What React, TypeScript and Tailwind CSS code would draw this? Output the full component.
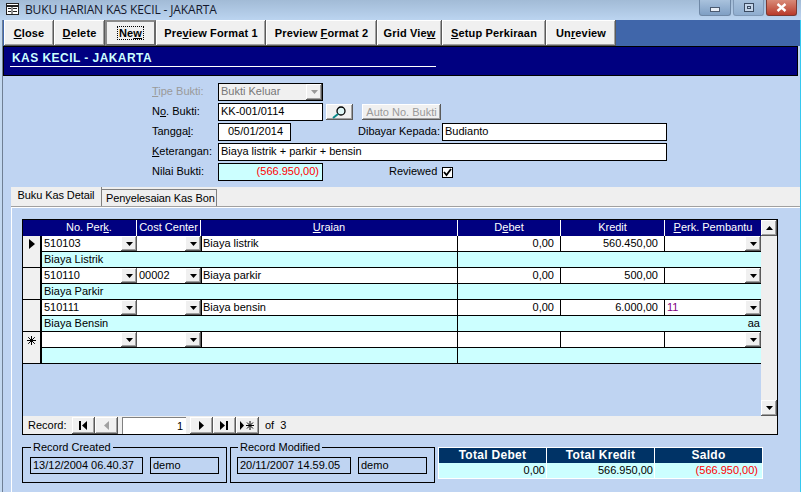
import React from "react";

const raised = "bg-[#f0f0f0] shadow-[inset_-1px_-1px_0_#5a5a5a,inset_1px_1px_0_#ffffff,inset_-2px_-2px_0_#a0a0a0]";

function Arrow({ color = "#000" }: { color?: string }) {
  return (
    <svg width="7" height="4" viewBox="0 0 7 4" className="block">
      <path d="M0 0h7L3.5 4z" fill={color} />
    </svg>
  );
}

function ComboBtn() {
  return (
    <div className={`w-4 h-[15px] shrink-0 ml-auto flex items-center justify-center ${raised}`}>
      <Arrow />
    </div>
  );
}

function ToolBtn({ w, children, focus }: { w: string; children: React.ReactNode; focus?: boolean }) {
  return (
    <div
      className={`${w} h-[26px] shrink-0 flex items-center justify-center font-bold tracking-[0.15px] text-black ${
        focus
          ? "bg-[#f0f0f0] border-2 border-t-[#8a8a8a] border-l-[#8a8a8a] border-r-[#6a6a6a] border-b-[#6a6a6a]"
          : raised
      }`}
    >
      {focus ? <span className="border border-dotted border-black px-[1px] leading-[12px]">{children}</span> : <span className="whitespace-pre">{children}</span>}
    </div>
  );
}

type RowData = { perk: string; cc: string; ur: string; deb: string; kre: string; pem: string; sub: string; subR?: string; mark?: "arrow" | "star" };

const rows: RowData[] = [
  { perk: "510103", cc: "", ur: "Biaya listrik", deb: "0,00", kre: "560.450,00", pem: "", sub: "Biaya Listrik", mark: "arrow" },
  { perk: "510110", cc: "00002", ur: "Biaya parkir", deb: "0,00", kre: "500,00", pem: "", sub: "Biaya Parkir" },
  { perk: "510111", cc: "", ur: "Biaya bensin", deb: "0,00", kre: "6.000,00", pem: "11", sub: "Biaya Bensin", subR: "aa" },
  { perk: "", cc: "", ur: "", deb: "", kre: "", pem: "", sub: "", mark: "star" },
];

const cols = "grid grid-cols-[95px_64px_257px_103px_104px_96px]";

function GridRow({ r }: { r: RowData }) {
  return (
    <div className="flex h-8">
      <div className="w-[19px] shrink-0 bg-[#f0f0f0] border-r-2 border-b border-black flex justify-center pt-[3px]">
        {r.mark === "arrow" && (
          <svg width="7" height="10" viewBox="0 0 7 10">
            <path d="M1 0l6 5-6 5z" fill="#000" />
          </svg>
        )}
        {r.mark === "star" && (
          <svg width="9" height="9" viewBox="0 0 9 9" className="mt-[1px]">
            <path d="M4.5 0v9M0 4.5h9M1.2 1.2l6.6 6.6M7.8 1.2l-6.6 6.6" stroke="#000" strokeWidth="1" />
          </svg>
        )}
      </div>
      <div className="flex-1 min-w-0">
        <div className={`${cols} h-4 bg-white border-b border-black`}>
          <div className="flex pl-[2px] leading-[15px]">
            <span>{r.perk}</span>
            <ComboBtn />
          </div>
          <div className="flex pl-[2px] leading-[15px]">
            <span>{r.cc}</span>
            <ComboBtn />
          </div>
          <div className="border-l border-r border-black pl-[1px] leading-[15px]">{r.ur}</div>
          <div className="border-r border-black text-right pr-[6px] leading-[15px]">{r.deb}</div>
          <div className="border-r border-black text-right pr-[6px] leading-[15px]">{r.kre}</div>
          <div className="flex pl-[2px] leading-[15px]">
            <span className="text-[#800080]">{r.pem}</span>
            <ComboBtn />
          </div>
        </div>
        <div className="flex h-4 bg-[#ccffff] border-b border-black leading-[15px]">
          <div className="w-[416px] border-r border-black pl-[2px]">{r.sub}</div>
          <div className="flex-1 text-right pr-[1px]">{r.subR}</div>
        </div>
      </div>
    </div>
  );
}

function NavBtn({ children }: { children: React.ReactNode }) {
  return <div className={`w-[23px] h-[17px] flex items-center justify-center ${raised}`}>{children}</div>;
}

function Info({ w, children }: { w: string; children: React.ReactNode }) {
  return <div className={`${w} h-[17px] border border-black pl-[2px] leading-[15px]`}>{children}</div>;
}

function Field({ className, children }: { className: string; children?: React.ReactNode }) {
  return <div className={`h-[18px] border border-black pl-[2px] leading-[14px] ${className}`}>{children}</div>;
}

export default function App() {
  return (
    <div className="w-[801px] h-[492px] overflow-hidden flex flex-col bg-[#bfd4f2] text-[11px] text-black font-['Liberation_Sans',Arial,sans-serif]">
      {/* title bar */}
      <div className="h-5 shrink-0 flex bg-gradient-to-b from-[#a2bbd6] to-[#bbd4f0] pl-[6px] pr-[4px]">
        <svg width="13" height="12" viewBox="0 0 13 12" className="mt-[3px] shrink-0">
          <rect x="0.5" y="0.5" width="12" height="11" fill="#fff" stroke="#222" />
          <path d="M0 3h13" stroke="#222" strokeWidth="2" />
          <path d="M2 5.5h3M2 8.5h3M7 5.5h4M7 8.5h4M6 4v7" stroke="#222" />
        </svg>
        <span className="ml-[6px] text-[12px] leading-[19px] text-[#14182c] font-['Open_Sans',sans-serif] tracking-[-0.14px]">
          BUKU HARIAN KAS KECIL - JAKARTA
        </span>
        <div className="ml-auto flex h-4 gap-[2px]">
          <div className="w-[32px] rounded-b-[3px] border border-t-0 border-[#6f88a6] bg-gradient-to-b from-[#a9c2dd] to-[#7f9fc4] flex items-center justify-center">
            <div className="w-[10px] h-[5px] mt-[3px] bg-[#e8eef6] border border-[#4a5a70]" />
          </div>
          <div className="w-[31px] rounded-b-[3px] border border-t-0 border-[#7f98b6] bg-gradient-to-b from-[#a9c2dd] to-[#8fadcf] flex items-center justify-center">
            <div className="w-[10px] h-[9px] border border-[#3a4a60] bg-[#c5d6ea] flex items-center justify-center">
              <div className="w-[4px] h-[3px] border border-[#3a4a60]" />
            </div>
          </div>
          <div className="w-[31px] rounded-b-[3px] border border-t-0 border-[#7a3a32] bg-gradient-to-b from-[#d88a78] to-[#b8392a] flex items-center justify-center">
            <svg width="11" height="9" viewBox="0 0 11 9">
              <path d="M1.5 1l8 7M9.5 1l-8 7" stroke="#fff" strokeWidth="2.4" />
            </svg>
          </div>
        </div>
      </div>

      <div className="flex-1 flex min-h-0">
        <div className="w-[3px] shrink-0 flex">
          <div className="w-[2px] bg-[#c3d8f0]" />
          <div className="w-[1px] bg-[#6f7f94]" />
        </div>

        <div className="flex-1 flex flex-col min-w-0">
          {/* toolbar */}
          <div className="h-[26px] shrink-0 flex bg-[#4066aa] pl-[1px]">
            <ToolBtn w="w-[50px]"><u>C</u>lose</ToolBtn>
            <ToolBtn w="w-[51px]"><u>D</u>elete</ToolBtn>
            <ToolBtn w="w-[51px]" focus>Ne<u>w</u></ToolBtn>
            <ToolBtn w="w-[110px]">Pre<u>v</u>iew Format 1</ToolBtn>
            <ToolBtn w="w-[111px]">Preview <u>F</u>ormat 2</ToolBtn>
            <ToolBtn w="w-[65px]">Grid Vie<u>w</u></ToolBtn>
            <ToolBtn w="w-[104px]"><u>S</u>etup Perkiraan</ToolBtn>
            <ToolBtn w="w-[70px]">Un<u>r</u>eview</ToolBtn>
          </div>

          {/* header */}
          <div className="h-[30px] shrink-0 mr-[2px] bg-[#000080] border-t border-b border-l border-r border-black pt-[4px]">
            <div className="ml-[6px] w-[426px] border-b border-white h-[16px] pl-[2px] text-[12px] leading-[14px] font-bold tracking-[0.45px] text-[#ccffff]">
              KAS KECIL - JAKARTA
            </div>
          </div>

          {/* form */}
          <div className="pl-[149px] pt-[6px] h-[111px] shrink-0">
            <div className="flex items-center h-5">
              <span className="w-[66px] mb-[2px] text-[#9a9a9a]"><u>T</u>ipe Bukti:</span>
              <div className="w-[105px] h-[18px] border border-black bg-[#f0f0f0] flex text-[#777] pl-[2px] leading-[14px]">
                <span>Bukti Keluar</span>
                <div className={`w-4 h-4 ml-auto flex items-center justify-center ${raised}`}>
                  <Arrow color="#999" />
                </div>
              </div>
            </div>
            <div className="flex items-center h-5">
              <span className="w-[66px] mb-[2px]">N<u>o</u>. Bukti:</span>
              <Field className="w-[105px] bg-white">KK-001/0114</Field>
              <div className={`w-[27px] h-4 ml-[3px] flex items-center justify-center ${raised}`}>
                <svg width="15" height="13" viewBox="0 0 15 13">
                  <circle cx="9" cy="5" r="4" fill="#dff6f6" stroke="#000" strokeWidth="1.3" />
                  <path d="M6 8L1 12" stroke="#0a8a8a" strokeWidth="2" />
                </svg>
              </div>
              <div className={`w-[79px] h-4 ml-[9px] flex items-center justify-center text-[#9a9a9a] ${raised}`}>Auto No. Bukti</div>
            </div>
            <div className="flex items-center h-5">
              <span className="w-[66px] mb-[2px]">Tangga<u>l</u>:</span>
              <Field className="w-[73px] bg-white text-center">05/01/2014</Field>
              <span className="ml-[67px] w-[84px] mb-[2px]">Dibayar Kepada:</span>
              <Field className="w-[225px] bg-white">Budianto</Field>
            </div>
            <div className="flex items-center h-5">
              <span className="w-[66px] mb-[2px]"><u>K</u>eterangan:</span>
              <Field className="w-[449px] bg-white">Biaya listrik + parkir + bensin</Field>
            </div>
            <div className="flex items-center h-5">
              <span className="w-[66px] mb-[2px]">Nilai Bukti:</span>
              <div className="w-[105px] h-[18px] border border-black bg-[#ccffff] text-right pr-[3px] leading-[14px] text-[#ff0000]">(566.950,00)</div>
              <span className="ml-[66px] w-[53px] mb-[2px]">Reviewed</span>
              <div className="w-[11px] h-[11px] border border-black bg-white flex items-center justify-center">
                <svg width="9" height="9" viewBox="0 0 9 9">
                  <path d="M1 4l2.5 3L8 1" fill="none" stroke="#000" strokeWidth="1.8" />
                </svg>
              </div>
            </div>
          </div>

          {/* tabs */}
          <div className="ml-[8px] flex-1 flex flex-col min-h-0 border-l border-white">
            <div className="h-5 shrink-0 bg-[#efefef] border-b border-[#a0a0a0] flex items-end -ml-[1px] tracking-[-0.1px] whitespace-nowrap">
              <div className="w-[91px] h-[19px] border-r border-[#808080] text-center leading-[16px]">Buku Kas Detail</div>
              <div className="w-[115px] h-[17px] border-t border-r border-[#808080] pl-[4px] leading-[16px]">Penyelesaian Kas Bon</div>
            </div>
            <div className="h-[1px] shrink-0 bg-white -ml-[1px]" />

            <div className="pl-[10px] pt-[11px]">
              {/* data grid */}
              <div className="w-[756px] h-[216px] border border-black flex flex-col">
                <div className="h-[196px] flex">
                  <div className="w-[738px]">
                    <div className="flex h-4 bg-[#000080] text-white text-center leading-[15px]">
                      <div className="w-[19px] shrink-0" />
                      <div className={`${cols} flex-1`}>
                        <div className="border-r border-white">No. Per<u>k</u>.</div>
                        <div className="border-r border-white">Cost Center</div>
                        <div className="border-r border-white"><u>U</u>raian</div>
                        <div className="border-r border-white">D<u>e</u>bet</div>
                        <div className="border-r border-white">Kredit</div>
                        <div><u>P</u>erk. Pembantu</div>
                      </div>
                    </div>
                    {rows.map((r, i) => (
                      <GridRow key={i} r={r} />
                    ))}
                  </div>
                  <div className="w-4 bg-[#efefef] flex flex-col justify-between">
                    <div className={`h-4 flex items-center justify-center ${raised}`}>
                      <svg width="7" height="4" viewBox="0 0 7 4"><path d="M0 4h7L3.5 0z" fill="#000" /></svg>
                    </div>
                    <div className={`h-4 flex items-center justify-center ${raised}`}>
                      <Arrow />
                    </div>
                  </div>
                </div>
                <div className="flex-1 bg-[#efefef] flex items-center pl-[5px]">
                  <span className="w-[44px] shrink-0">Record:</span>
                  <NavBtn>
                    <svg width="9" height="9" viewBox="0 0 9 9"><path d="M0 0h2v9H0zM8 0v9L3 4.5z" fill="#000" /></svg>
                  </NavBtn>
                  <NavBtn>
                    <svg width="6" height="9" viewBox="0 0 6 9"><path d="M5 0v9L0 4.5z" fill="#a0a0a0" /></svg>
                  </NavBtn>
                  <div className="w-[64px] h-[17px] ml-[4px] mr-[4px] bg-white border-t border-l border-[#808080] text-right pr-[3px] leading-[17px]">1</div>
                  <NavBtn>
                    <svg width="6" height="9" viewBox="0 0 6 9"><path d="M0 0v9l5-4.5z" fill="#000" /></svg>
                  </NavBtn>
                  <NavBtn>
                    <svg width="9" height="9" viewBox="0 0 9 9"><path d="M0 0v9l5-4.5zM6 0h2v9H6z" fill="#000" /></svg>
                  </NavBtn>
                  <NavBtn>
                    <svg width="15" height="9" viewBox="0 0 15 9">
                      <path d="M0 0v9l4-4.5z" fill="#000" />
                      <path d="M10 0v9M6 4.5h8M7 1.5l6 6M13 1.5l-6 6" stroke="#000" strokeWidth="1" />
                    </svg>
                  </NavBtn>
                  <span className="ml-[6px]">of&nbsp;&nbsp;3</span>
                </div>
              </div>

              {/* bottom */}
              <div className="flex mt-[5px]">
                <fieldset className="w-[205px] h-[43px] border border-black flex gap-[7px] pl-[7px] pt-[3px]">
                  <legend className="ml-[1px] px-[2px] leading-[14px]">Record Created</legend>
                  <Info w="w-[113px]">13/12/2004 06.40.37</Info>
                  <Info w="w-[69px]">demo</Info>
                </fieldset>
                <fieldset className="w-[205px] h-[43px] ml-[3px] border border-black flex gap-[7px] pl-[6px] pt-[3px]">
                  <legend className="ml-[1px] px-[2px] leading-[14px]">Record Modified</legend>
                  <Info w="w-[114px]">20/11/2007 14.59.05</Info>
                  <Info w="w-[69px]">demo</Info>
                </fieldset>
                <div className="w-[325px] h-[32px] ml-[3px] mt-[7px] border border-white grid grid-cols-[107px_107px_107px] gap-x-[1px] bg-white grid-rows-[15px_15px] gap-y-[0px] text-[12px]">
                  <div className="bg-[#003366] text-white font-bold text-center tracking-[0.3px] leading-[15px]">Total Debet</div>
                  <div className="bg-[#003366] text-white font-bold text-center tracking-[0.3px] leading-[15px]">Total Kredit</div>
                  <div className="bg-[#003366] text-white font-bold text-center tracking-[0.3px] leading-[15px]">Saldo</div>
                  <div className="bg-[#ccffff] text-right text-[11px] pr-[1px] leading-[15px]">0,00</div>
                  <div className="bg-[#ccffff] text-right text-[11px] pr-[1px] leading-[15px]">566.950,00</div>
                  <div className="bg-[#ccffff] text-right text-[11px] pr-[4px] leading-[15px] text-[#ff0000]">(566.950,00)</div>
                </div>
              </div>
            </div>
          </div>
        </div>

        <div className="w-[1px] shrink-0 bg-[#35c8f0]" />
      </div>
    </div>
  );
}
